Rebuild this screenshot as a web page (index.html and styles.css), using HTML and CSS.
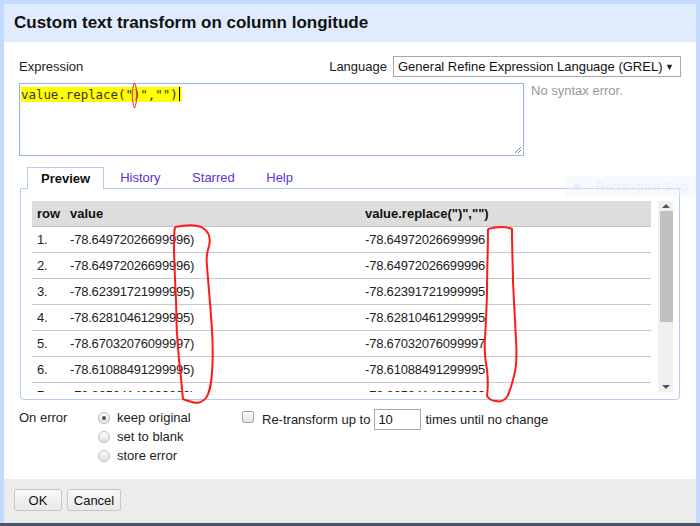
FILE: index.html
```html
<!DOCTYPE html>
<html>
<head>
<meta charset="utf-8">
<link rel="stylesheet" href="styles.css">
</head>
<body>
<div class="frame">
  <div class="dialog">
    <div class="titlebar">Custom text transform on column longitude</div>
    <div class="body">
      <div class="exprhead">
        <div class="lbl-expr">Expression</div>
        <div class="lbl-lang">Language</div>
        <div class="select"><span>General Refine Expression Language (GREL)</span><span class="arrow">&#9660;</span></div>
      </div>
      <div class="exprrow">
        <div class="code"><span class="hl">value.replace(")","")<span class="caret"></span></span>
          <svg class="grip" width="9" height="9" viewBox="0 0 9 9"><path d="M8 2 L2 8 M8 5 L5 8" stroke="#888" stroke-width="1"/></svg>
        </div>
        <div class="status">No syntax error.</div>
      </div>
      <div class="tabs">
        <div class="tab active">Preview</div>
        <div class="tab">History</div>
        <div class="tab">Starred</div>
        <div class="tab">Help</div>
      </div>
      <div class="panel">
        <div class="tablewrap">
          <table class="grid">
            <colgroup><col class="c1"><col class="c2"><col class="c3"></colgroup>
            <thead><tr><th>row</th><th>value</th><th>value.replace(")","")</th></tr></thead>
            <tbody>
              <tr><td>1.</td><td>-78.64972026699996)</td><td>-78.64972026699996</td></tr>
              <tr><td>2.</td><td>-78.64972026699996)</td><td>-78.64972026699996</td></tr>
              <tr><td>3.</td><td>-78.62391721999995)</td><td>-78.62391721999995</td></tr>
              <tr><td>4.</td><td>-78.62810461299995)</td><td>-78.62810461299995</td></tr>
              <tr><td>5.</td><td>-78.67032076099997)</td><td>-78.67032076099997</td></tr>
              <tr><td>6.</td><td>-78.61088491299995)</td><td>-78.61088491299995</td></tr>
              <tr><td>7.</td><td>-78.80524143899999)</td><td>-78.80524143899999</td></tr>
            </tbody>
          </table>
        </div>
        <div class="scrollbar">
          <div class="sb-up"></div>
          <div class="sb-thumb"></div>
          <div class="sb-track"></div>
          <div class="sb-down"></div>
        </div>
      </div>
      <div class="options">
        <div class="onerr">On error</div>
        <div class="radios">
          <div class="radio-row"><span class="radio checked"></span>keep original</div>
          <div class="radio-row"><span class="radio"></span>set to blank</div>
          <div class="radio-row"><span class="radio"></span>store error</div>
        </div>
        <div class="retransform">
          <span class="checkbox"></span>
          <span>Re-transform up to</span>
          <span class="num">10</span>
          <span>times until no change</span>
        </div>
      </div>
    </div>
    <div class="footer">
      <div class="btn ok">OK</div>
      <div class="btn cancel">Cancel</div>
    </div>
  </div>
</div>
<div class="bottomline"></div>
<div class="snip"><span class="snip-dot"></span><span class="snip-text">Rectangular Snip</span></div>
<svg class="annot" width="700" height="526" viewBox="0 0 700 526">
  <path d="M134.5 83 C137.5 88 137.5 102 134.5 108 C131.5 102 131.5 88 134.5 83 Z" fill="none" stroke="#ff1a1a" stroke-width="1"/>
  <path d="M175 227 C185 225 196 224 203 228 C209 232 211 238 209 246 C207 252 206 258 207 266 C208 280 210 300 212 330 C213 345 213 360 212 373 C211 385 210 392 206 398 C203 402 197 404 192 402 C188 401 185 400 183 399 C182 390 181 375 179 360 C177 340 176 320 176 300 C175 280 174 260 174 245 C174 238 174 232 175 227" fill="none" stroke="#ff1a1a" stroke-width="2" stroke-linejoin="round"/>
  <path d="M488 229 C495 227 505 226 512 229 C512 250 513 270 513 282 C514 300 515 320 516 340 C517 355 517 365 514 376 C512 384 510 392 507 397 C504 401 500 402 496 401 C492 401 489 399 487 396 C488 388 488 378 487 370 C485 360 484 350 485 338 C486 320 487 300 487 290 C487 270 488 250 488 229" fill="none" stroke="#ff1a1a" stroke-width="2" stroke-linejoin="round"/>
</svg>
</body>
</html>
```

FILE: styles.css
```css
* { box-sizing: border-box; }
body {
  margin: 0;
  width: 700px;
  height: 526px;
  overflow: hidden;
  position: relative;
  background: #c3d9ff;
  font-family: "Liberation Sans", Arial, sans-serif;
  font-size: 13px;
  color: #222;
}
.frame { padding: 4px 4px 0 4px; height: 523px; }
.dialog { display: flex; flex-direction: column; height: 100%; background: #fff; }
.titlebar {
  height: 38px;
  background: #e0ebfe;
  display: flex;
  align-items: center;
  padding-left: 10px;
  font-size: 17px;
  font-weight: bold;
  color: #111;
}
.body { flex: 1; padding: 14px 15px 0 15px; }
.exprhead { display: flex; align-items: center; height: 21px; }
.lbl-expr { flex: 1; }
.lbl-lang { margin-right: 6px; }
.select {
  width: 288px;
  height: 21px;
  border: 1px solid #a9a9a9;
  display: flex;
  align-items: center;
  justify-content: space-between;
  padding: 0 6px 0 4px;
  color: #111;
}
.select .arrow { font-size: 9px; color: #222; }
.exprrow { display: flex; margin-top: 6px; }
.code {
  position: relative;
  width: 505px;
  height: 73px;
  border: 1px solid #96b3e6;
  padding: 3px 1px;
  font-family: "DejaVu Sans Mono", "Liberation Mono", monospace;
  font-size: 12.4px;
  line-height: 15px;
  color: #333;
}
.hl { background: #ffff00; display: inline-block; padding-right: 2px; }
.caret { display: inline-block; width: 1px; height: 14px; background: #000; vertical-align: -2px; margin-left: 1px; }
.grip { position: absolute; right: 1px; bottom: 1px; }
.status { margin-left: 7px; color: #999; line-height: 15px; }
.tabs { display: flex; margin-top: 11px; padding-left: 8px; height: 22px; }
.tab {
  line-height: 21px;
  padding: 0 15.5px 0 16px;
  color: #5a33d6;
}
.tab.active {
  padding: 0 13px;
  border: 1px solid #b3cbf3;
  border-bottom: none;
  background: #fff;
  color: #111;
  font-weight: bold;
  position: relative;
  z-index: 1;
  height: 22px;
}
.panel {
  margin-left: 1px;
  margin-top: -1px;
  width: 660px;
  height: 212px;
  border: 1px solid #b3cbf3;
  border-radius: 0 0 4px 4px;
  padding: 12px 6px 7px 11px;
  display: flex;
}
.tablewrap { width: 619px; height: 191px; overflow: hidden; }
.grid { width: 619px; border-collapse: collapse; table-layout: fixed; }
.grid .c1 { width: 33px; }
.grid .c2 { width: 295px; }
.grid th {
  background: #dddddd;
  height: 25px;
  text-align: left;
  padding: 0 5px;
  font-weight: bold;
  color: #111;
  border-bottom: 1px solid #c4c4c4;
}
.grid td {
  height: 26px;
  padding: 0 5px;
  border-bottom: 1px solid #c8c8c8;
  color: #222;
  white-space: nowrap;
  letter-spacing: -0.2px;
}
.scrollbar { margin-left: 7px; width: 15px; height: 191px; background: #f0f0f0; display: flex; flex-direction: column; }
.sb-up, .sb-down { height: 10px; display: flex; justify-content: center; align-items: center; }
.sb-up::after { content: ""; border-left: 4px solid transparent; border-right: 4px solid transparent; border-bottom: 4px solid #555; }
.sb-down::after { content: ""; border-left: 4px solid transparent; border-right: 4px solid transparent; border-top: 4px solid #555; }
.sb-thumb { height: 111px; margin: 0 0 0 2px; background: #c1c1c1; }
.sb-track { flex: 1; }
.options { display: flex; margin-top: 8px; line-height: 19px; }
.onerr { width: 79px; }
.radios { width: 144px; display: flex; flex-direction: column; }
.radio-row { display: flex; align-items: center; height: 19px; color: #222; }
.radio {
  width: 12px; height: 12px; border-radius: 50%;
  border: 1px solid #b9b9b9;
  background: linear-gradient(#fdfdfd, #e2e2e2);
  margin-right: 7px;
  display: flex; align-items: center; justify-content: center;
}
.radio.checked::after { content: ""; width: 4px; height: 4px; border-radius: 50%; background: #555; }
.retransform { display: flex; align-items: center; height: 22px; }
.checkbox {
  width: 12px; height: 12px; border: 1px solid #a8a8a8; border-radius: 2px;
  background: linear-gradient(#fdfdfd, #e4e4e4);
  margin-right: 8px; margin-bottom: 4px;
}
.num {
  width: 47px; height: 21px; border: 1px solid #a9a9a9;
  margin: 0 4px; padding-left: 3px; line-height: 19px; color: #111;
}
.footer { height: 44px; background: #ececec; padding: 10px 0 0 10px; display: flex; gap: 5px; align-items: flex-start; }
.btn {
  height: 22px; border: 1px solid #c6c6c6; border-radius: 3px;
  background: linear-gradient(#f8f8f8, #e9e9e9);
  display: flex; align-items: center; justify-content: center; color: #111;
}
.btn.ok { width: 48px; }
.btn.cancel { width: 54px; }
.bottomline { height: 3px; background: #4a5668; }
.snip {
  position: absolute; left: 565px; top: 176px; width: 131px; height: 21px;
  background: rgba(235, 243, 255, 0.4);
  display: flex; align-items: center; padding-left: 9px;
  overflow: hidden; white-space: nowrap;
}
.snip-text { color: rgba(215, 222, 234, 0.45); font-size: 12px; }
.snip-dot { width: 6px; height: 6px; border-radius: 50%; background: rgba(215, 222, 234, 0.5); margin-right: 16px; flex: none; }
.annot { position: absolute; left: 0; top: 0; pointer-events: none; }
```
